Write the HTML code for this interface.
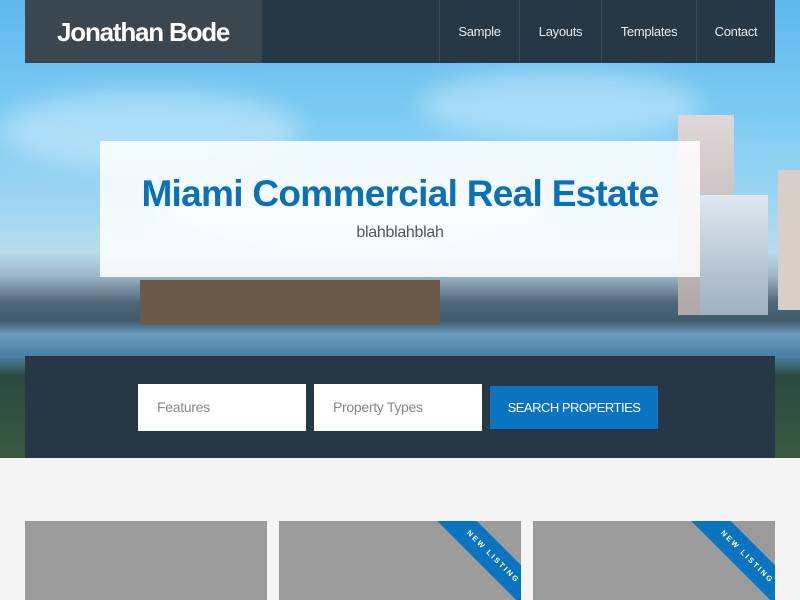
<!DOCTYPE html>
<html><head><style>
*{margin:0;padding:0;box-sizing:border-box}
body{width:800px;height:600px;overflow:hidden;background:#f4f4f4;font-family:"Liberation Sans",sans-serif;position:relative}
.hero{position:absolute;left:0;top:0;width:800px;height:458px;background:linear-gradient(180deg,#5fb8ec 0%,#7ccbf3 25%,#9fd6f2 45%,#b9dceb 55%,#a0b8c8 60%,#50687a 66%,#3f5a68 70%,#6a9cc0 73%,#4a7ea0 78%,#2b4a40 82%,#3a5a40 100%)}
.cloud{position:absolute;border-radius:50%;background:rgba(255,255,255,.35);filter:blur(12px)}
.bld{position:absolute}
nav{position:absolute;left:25px;top:0;width:750px;height:63px;background:#263746}
.brand{position:absolute;left:0;top:0;width:237px;height:63px;background:#3a4750;color:#fff;font-size:26px;font-weight:bold;padding:17px 0 0 32px;letter-spacing:-1.2px}
.nl{position:absolute;top:0;height:63px;border-left:1px solid #3c4b58;color:#e6eaee;font-size:13px;line-height:63px;text-align:center;letter-spacing:-.3px}
.box{position:absolute;left:100px;top:141px;width:600px;height:136px;background:rgba(255,255,255,.86);text-align:center}
.box h1{color:#0b70b5;font-size:37px;font-weight:bold;margin-top:32px;letter-spacing:-.7px}
.box p{color:#555;font-size:16px;margin-top:9px;letter-spacing:-.3px}
.search{position:absolute;left:25px;top:356px;width:750px;height:102px;background:#263746}
.in{position:absolute;top:28px;width:168px;height:47px;background:#fff;color:#888;font-size:14px;padding:15px 0 0 19px;letter-spacing:-.3px}
.btn{position:absolute;left:465px;top:30px;width:168px;height:43px;background:#0a74c0;color:#fff;font-size:13px;text-align:center;line-height:43px;letter-spacing:-.5px}
.card{position:absolute;top:521px;width:242px;height:79px;background:#9b9b9b;overflow:hidden}
.rib{position:absolute;right:-52px;top:22px;width:160px;height:28px;background:#0a74c0;transform:rotate(45deg);color:#fff;font-size:7.5px;font-weight:bold;letter-spacing:2px;text-align:center;line-height:28px}
</style></head><body>
<div class="hero">
<div class="cloud" style="left:0;top:90px;width:300px;height:80px"></div>
<div class="cloud" style="left:420px;top:70px;width:280px;height:70px"></div>
<div class="cloud" style="left:150px;top:180px;width:400px;height:60px"></div>
<div class="bld" style="left:678px;top:115px;width:56px;height:200px;background:linear-gradient(#e0d8d8,#b0a8a8)"></div>
<div class="bld" style="left:700px;top:195px;width:68px;height:120px;background:linear-gradient(#dfe8f0,#9fb0c0)"></div>
<div class="bld" style="left:778px;top:170px;width:22px;height:140px;background:#d8d0c8"></div>
<div style="position:absolute;left:140px;top:280px;width:300px;height:45px;background:#6a5a4a"></div>
</div>
<nav><div class="brand">Jonathan Bode</div>
<div class="nl" style="left:414px;width:80px">Sample</div>
<div class="nl" style="left:494px;width:82px">Layouts</div>
<div class="nl" style="left:576px;width:95px">Templates</div>
<div class="nl" style="left:671px;width:79px">Contact</div></nav>
<div class="box"><h1>Miami Commercial Real Estate</h1><p>blahblahblah</p></div>
<div class="search"><div class="in" style="left:113px">Features</div><div class="in" style="left:289px">Property Types</div><div class="btn">SEARCH PROPERTIES</div></div>
<div class="card" style="left:25px"></div>
<div class="card" style="left:279px"><div class="rib">NEW LISTING</div></div>
<div class="card" style="left:533px"><div class="rib">NEW LISTING</div></div>
</body></html>
